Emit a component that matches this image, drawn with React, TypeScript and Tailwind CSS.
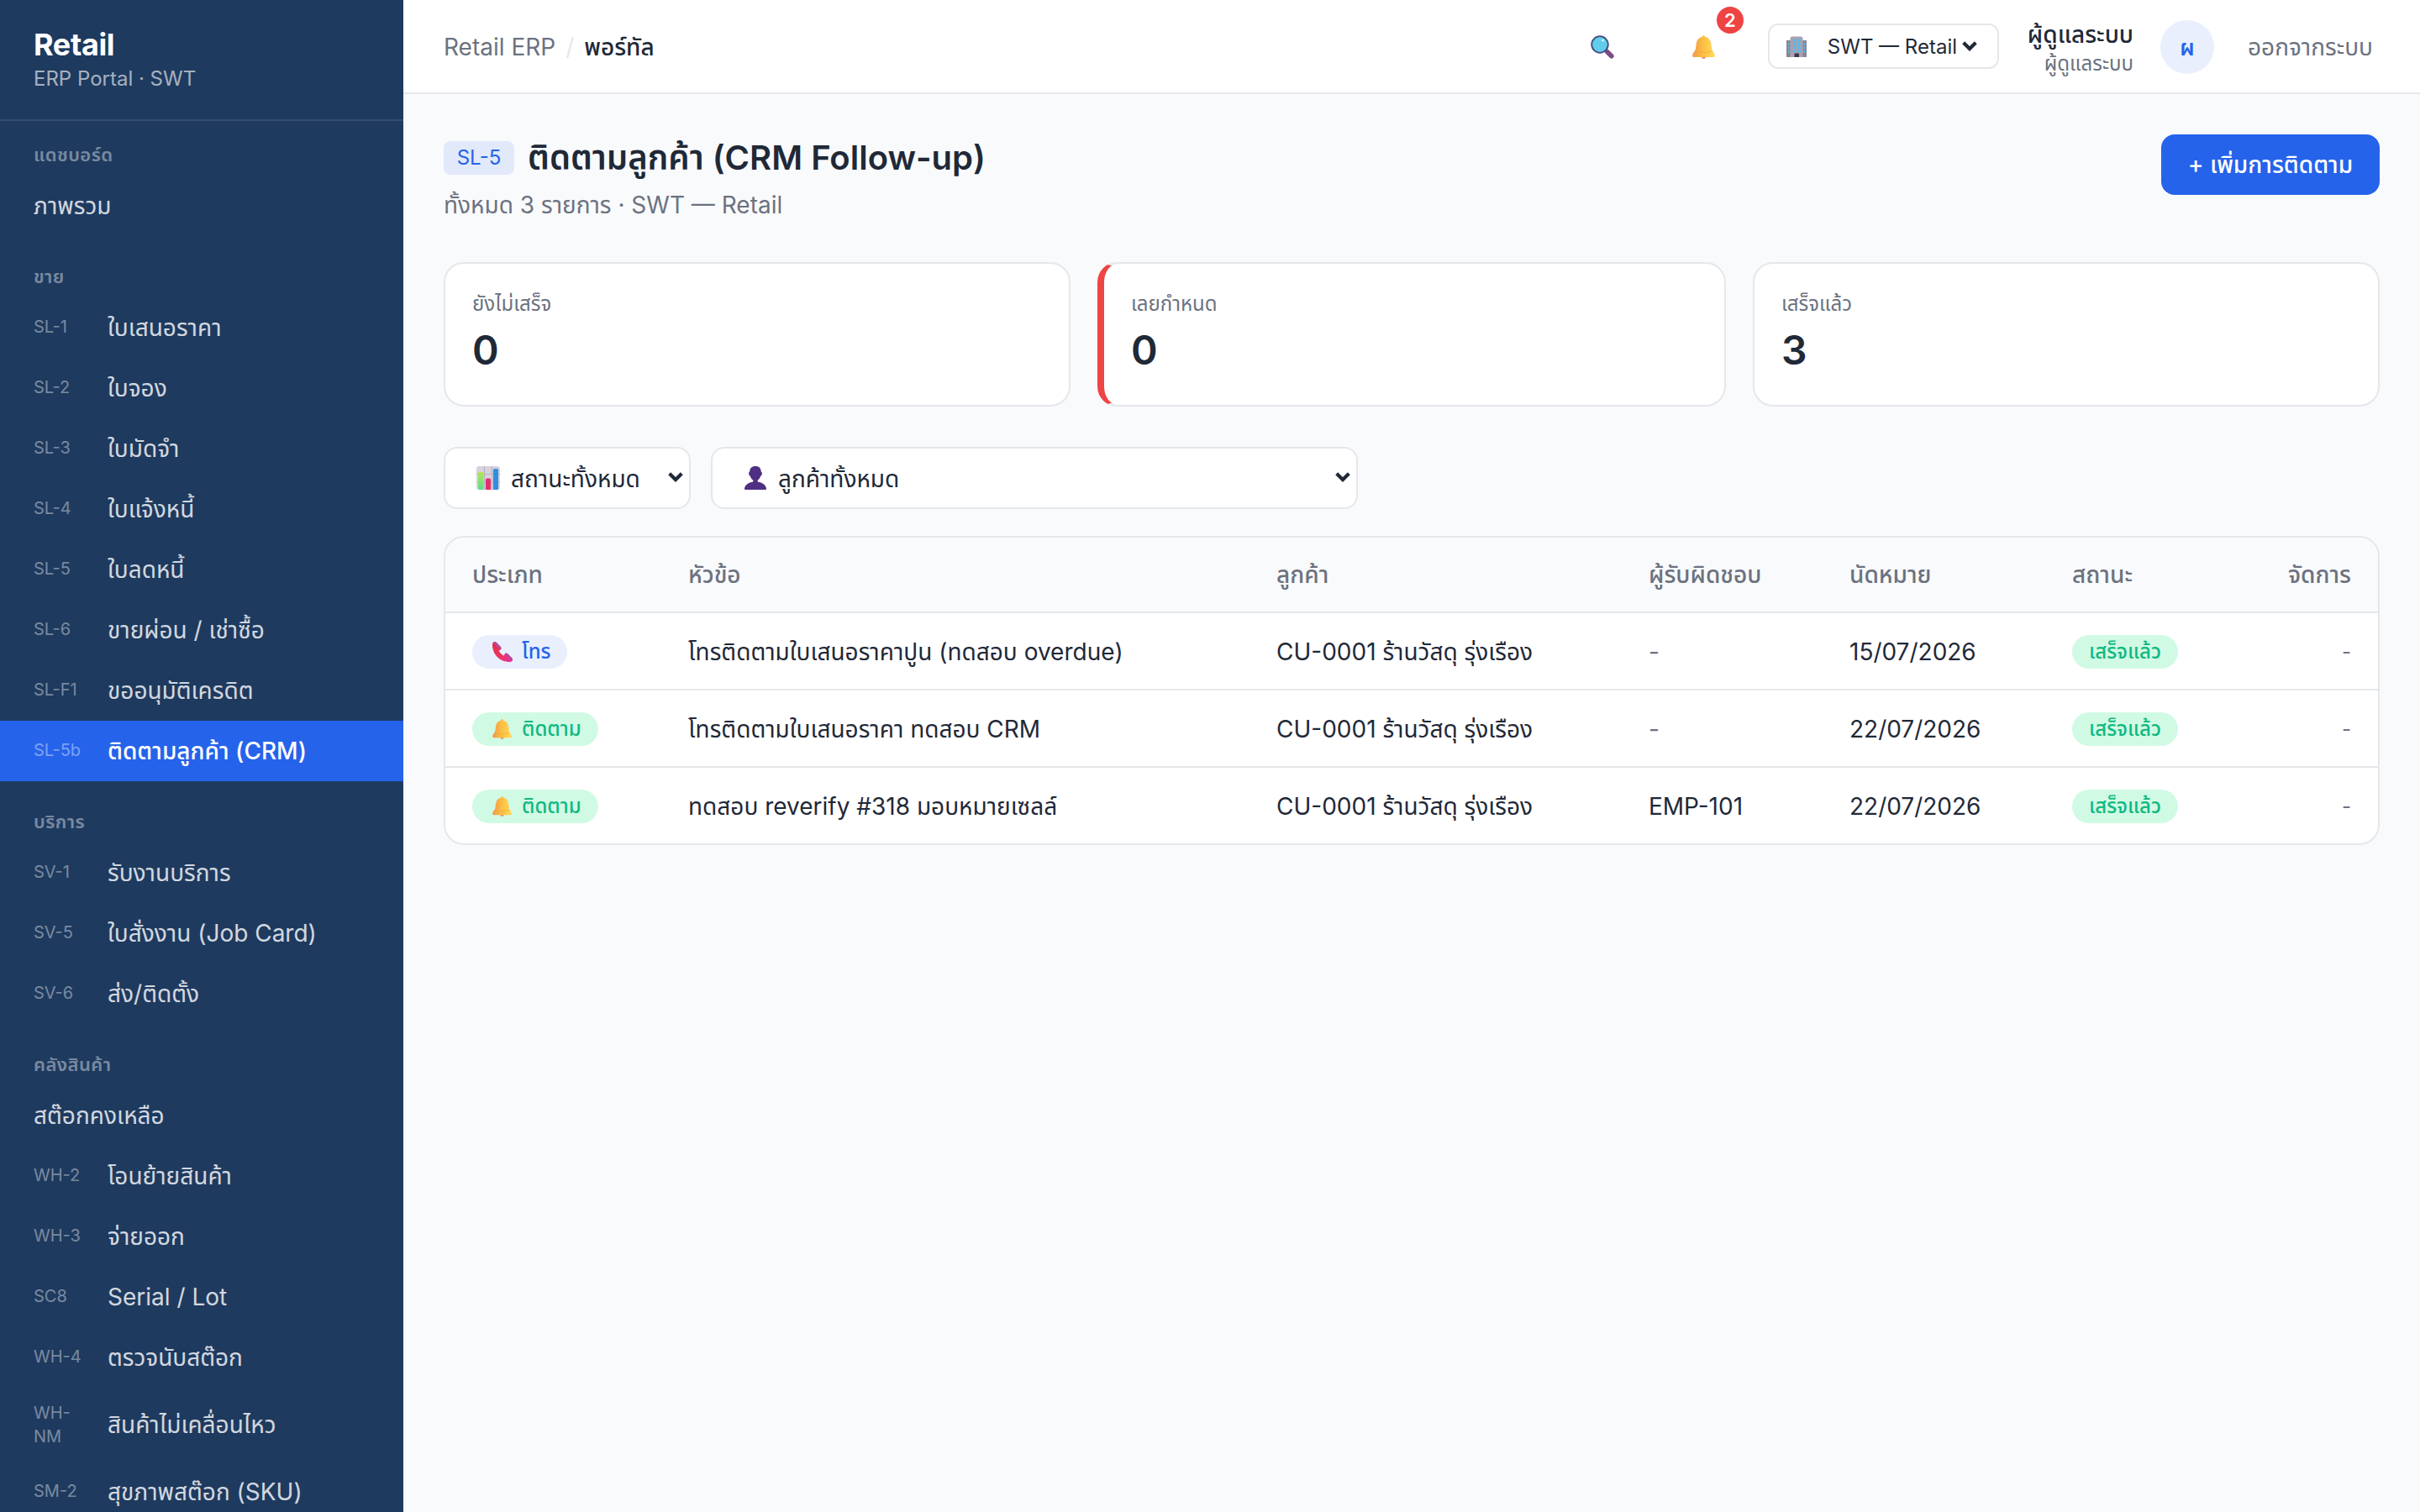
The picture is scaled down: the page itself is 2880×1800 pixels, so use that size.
import type { ReactNode } from "react";
import clsx from "clsx";

type NavItem = { code?: string; label: string; active?: boolean; tall?: boolean };

const sections: { title: string; items: NavItem[] }[] = [
  { title: "แดชบอร์ด", items: [{ label: "ภาพรวม" }] },
  {
    title: "ขาย",
    items: [
      { code: "SL-1", label: "ใบเสนอราคา" },
      { code: "SL-2", label: "ใบจอง" },
      { code: "SL-3", label: "ใบมัดจำ" },
      { code: "SL-4", label: "ใบแจ้งหนี้" },
      { code: "SL-5", label: "ใบลดหนี้" },
      { code: "SL-6", label: "ขายผ่อน / เช่าซื้อ" },
      { code: "SL-F1", label: "ขออนุมัติเครดิต" },
      { code: "SL-5b", label: "ติดตามลูกค้า (CRM)", active: true },
    ],
  },
  {
    title: "บริการ",
    items: [
      { code: "SV-1", label: "รับงานบริการ" },
      { code: "SV-5", label: "ใบสั่งงาน (Job Card)" },
      { code: "SV-6", label: "ส่ง/ติดตั้ง" },
    ],
  },
  {
    title: "คลังสินค้า",
    items: [
      { label: "สต๊อกคงเหลือ" },
      { code: "WH-2", label: "โอนย้ายสินค้า" },
      { code: "WH-3", label: "จ่ายออก" },
      { code: "SC8", label: "Serial / Lot" },
      { code: "WH-4", label: "ตรวจนับสต๊อก" },
      { code: "WH-NM", label: "สินค้าไม่เคลื่อนไหว", tall: true },
      { code: "SM-2", label: "สุขภาพสต๊อก (SKU)" },
    ],
  },
];

const rows = [
  { type: "call", subject: "โทรติดตามใบเสนอราคาปูน (ทดสอบ overdue)", owner: "-", date: "15/07/2026" },
  { type: "follow", subject: "โทรติดตามใบเสนอราคา ทดสอบ CRM", owner: "-", date: "22/07/2026" },
  { type: "follow", subject: "ทดสอบ reverify #318 มอบหมายเซลล์", owner: "EMP-101", date: "22/07/2026" },
];

const columns = "grid grid-cols-[257px_700px_443px_239px_265px_1fr] items-center px-8";

function SearchIcon() {
  return (
    <svg viewBox="0 0 28 28" className="size-7">
      <path d="M19.500 19.500l5.300 5.300" stroke="#7b4a86" strokeWidth="5.600" strokeLinecap="round" />
      <circle cx="11" cy="11" r="9.8" fill="#62cdea" stroke="#464a80" strokeWidth="1.8" />
      <circle cx="14.5" cy="6" r="1.5" fill="#d7f4fc" />
    </svg>
  );
}

function BellIcon({ className }: { className: string }) {
  return (
    <svg viewBox="0 0 28 28" className={className}>
      <defs>
        <linearGradient id="bell" x1="0" x2="1">
          <stop offset="0" stopColor="#f0994a" />
          <stop offset="0.5" stopColor="#fcc044" />
          <stop offset="1" stopColor="#ffdb5c" />
        </linearGradient>
      </defs>
      <circle cx="13.500" cy="25.300" r="2.600" fill="#f08a62" />
      <path
        d="M13.500 0c.9 0 1.500.7 1.700 2 4.300.7 6.700 3.800 7.200 8.200l.8 6.300c.3 2.300 3.300 3.800 3.600 7.500.1 1.200-.3 2-1.300 2H1.600c-1 0-1.500-.8-1.400-2 .3-3.700 3.400-5.200 3.700-7.500l.8-6.300C5.200 5.800 7.500 2.700 11.800 2c.2-1.300.8-2 1.700-2z"
        fill="url(#bell)"
      />
      <path d="M3.900 18.700c6 2.400 13.500 2.400 19.300 0" stroke="#f3a93e" strokeWidth="0.900" fill="none" />
    </svg>
  );
}

function BuildingIcon() {
  return (
    <svg viewBox="0 0 24 26" className="h-[26px] w-6">
      <path d="M0 5h5v20H0zM19 5h5v20h-5z" fill="#8c8494" />
      <path d="M6 .5h12L19.500 2v23h-15V2z" fill="#a9a1b0" />
      <path
        d="M8 3.500h3.500v3H8zM13 3.500h3.500v3H13zM8 7.700h3.500v3H8zM13 7.700h3.500v3H13zM8 12h3.500v3H8zM13 12h3.500v3H13zM8 16.300h3.500v3H8zM13 16.300h3.500v3H13zM2 8h1.500v3H2zM2 12.500h1.500v3H2zM2 17h1.500v3H2zM20.500 8H22v3h-1.500zM20.500 12.500H22v3h-1.500zM20.500 17H22v3h-1.500z"
        fill="#4fbdf2"
      />
      <path d="M9.500 20.500h5.500V25H9.500z" fill="#43364c" />
    </svg>
  );
}

function ChartIcon() {
  return (
    <svg viewBox="0 0 28 28" className="size-7">
      <defs>
        <linearGradient id="bar" x1="0" y1="0" x2="0" y2="1">
          <stop offset="0" stopColor="#b4e552" />
          <stop offset="1" stopColor="#5fdd8e" />
        </linearGradient>
      </defs>
      <rect width="28" height="28" rx="3" fill="#d8d2de" />
      <path d="M0 9.500h28M0 19h28M9.500 0v28M18.500 0v28" stroke="#b9b2c4" strokeWidth="1.200" />
      <path d="M2 8.500q0-1.500 1.500-1.500h3.500Q8.500 7 8.500 8.500V28H3.500q-1.500 0-1.500-1z" fill="url(#bar)" />
      <path d="M11 16q0-1.500 1.500-1.500H15.500q1.500 0 1.500 1.500V28h-6z" fill="#e2306f" />
      <path d="M20 4.500Q20 3 21.500 3h3Q26 3 26 4.500V27q0 1-1 1h-5z" fill="#2f8fe0" />
    </svg>
  );
}

function PersonIcon() {
  return (
    <svg viewBox="0 0 28 28" className="size-7">
      <path
        d="M14 0c4.600 0 6.700 2.600 6.700 6.500.9.300 1.300 1.300 1.200 2.500-.1 1.500-.9 2.600-1.800 2.700-.6 2.300-1.800 4-3.400 5v1.800c5.500.9 9.500 3.500 10.300 8.100.1.800-.2 1.400-1 1.400H2c-.8 0-1.100-.6-1-1.400.8-4.600 4.800-7.200 10.300-8.100v-1.800c-1.600-1-2.800-2.700-3.400-5-.9-.1-1.700-1.200-1.800-2.700-.1-1.200.3-2.200 1.200-2.500C7.300 2.600 9.400 0 14 0z"
        fill="#4f2f83"
      />
    </svg>
  );
}

function PhoneIcon() {
  return (
    <svg viewBox="0 0 24 24" className="size-6">
      <defs>
        <linearGradient id="phone" x1="0" y1="0" x2="1" y2="1">
          <stop offset="0" stopColor="#e02c4c" />
          <stop offset="0.500" stopColor="#ee3558" />
          <stop offset="1" stopColor="#e8309c" />
        </linearGradient>
      </defs>
      <path
        d="M0 3.500C0 1.300 1 0 2.800 0l7.700 8c-.2 1.400-1.400 2.200-3 2.300 1 2.700 3.600 5.300 6.500 6.500 0-1.500.6-2.700 2-3.200l8 8c0 1.500-1.200 2.400-3.200 2.400C9 24 0 15.500 0 3.500z"
        fill="url(#phone)"
      />
      <path d="M2.800 0c1-.3 1.700.2 2.400 1L10 6c.8.8.8 1.500.5 2.300L8.500 9 1.800 1.500z" fill="#b84a9c" />
      <path d="M16 13.600c1-.3 1.700 0 2.400.7L23.500 19.500c.8.8.8 1.500.5 2.300l-2 .4-7-7z" fill="#bb449f" />
    </svg>
  );
}

function Chevron() {
  return (
    <svg viewBox="0 0 18 12" className="mb-0.5 h-3 w-[18px] shrink-0">
      <path d="M1.700 1.700L9 9l7.300-7.300" fill="none" stroke="#1f2937" strokeWidth="4.200" />
    </svg>
  );
}

function Pill({ tone, children }: { tone: "blue" | "green"; children: ReactNode }) {
  return (
    <span
      className={clsx(
        "inline-flex h-10 items-center rounded-full text-2xl font-medium whitespace-nowrap",
        tone === "blue" ? "bg-[#e9effd] text-[#2563eb]" : "bg-[#d1fae5] text-[#10b981]",
      )}
    >
      {children}
    </span>
  );
}

function Sidebar() {
  return (
    <aside className="h-full w-[480px] shrink-0 overflow-hidden bg-[#1e3a5f] text-white">
      <div className="h-36 border-b-2 border-white/10 px-10 pt-[31px]">
        <div className="text-4xl leading-[44px] font-bold tracking-[-0.01em]">Retail</div>
        <div className="mt-px text-2xl leading-9 opacity-60">ERP Portal · SWT</div>
      </div>
      <nav>
        {sections.map((section, i) => (
          <div key={section.title}>
            <div
              className={clsx(
                "flex items-end px-10 pb-[9px] text-[22px] leading-8 font-semibold tracking-[0.02em] opacity-40",
                i === 0 ? "h-[65px]" : "h-[73px]",
              )}
            >
              {section.title}
            </div>
            {section.items.map((item) => (
              <div
                key={item.label}
                className={clsx(
                  "flex items-center px-10 text-[28px] whitespace-nowrap",
                  item.tall ? "h-[88px]" : "h-[72px]",
                  item.active ? "bg-[#2563eb] font-medium" : "opacity-80",
                )}
              >
                {item.code && (
                  <span
                    className={clsx(
                      "mr-6 w-16 shrink-0 text-xl leading-7 font-normal whitespace-normal",
                      item.active ? "opacity-40" : "opacity-50",
                      !item.tall && "pb-0.5",
                    )}
                  >
                    {item.code}
                  </span>
                )}
                <span>{item.label}</span>
              </div>
            ))}
          </div>
        ))}
      </nav>
    </aside>
  );
}

function Topbar() {
  return (
    <header className="flex h-28 items-center border-b-2 border-[#e5e7eb] bg-white pr-14 pl-12 text-[28px]">
      <div className="flex items-center pt-0.5">
        <span className="text-[#6b7280]">Retail ERP</span>
        <span className="mx-3 text-[#e5e7eb]">/</span>
        <span className="font-medium">พอร์ทัล</span>
      </div>
      <div className="ml-auto flex items-center pt-0.5">
        <SearchIcon />
        <div className="relative mr-[62px] ml-[93px]">
          <BellIcon className="size-7" />
          <span className="absolute -top-[34px] left-[29px] flex size-8 items-center justify-center rounded-full bg-[#ef4444] text-[22px] font-semibold text-white">
            2
          </span>
        </div>
        <button className="mb-0.5 flex h-[54px] w-[275px] items-center rounded-xl border-2 border-[#e5e7eb] pt-0.5 pl-5 text-2xl whitespace-nowrap">
          <BuildingIcon />
          <span className="mr-1.5 ml-[25px]">SWT — Retail</span>
          <Chevron />
        </button>
        <div className="ml-[34px] pt-[3px] text-right whitespace-nowrap">
          <div className="text-[28px] leading-9 font-medium">ผู้ดูแลระบบ</div>
          <div className="text-2xl leading-[34px] text-[#6b7280]">ผู้ดูแลระบบ</div>
        </div>
        <div className="ml-8 flex size-16 items-center justify-center rounded-full bg-[#e9effd] text-[26px] font-semibold text-[#2563eb]">
          ผ
        </div>
        <span className="ml-10 text-[28px] text-[#6b7280]">ออกจากระบบ</span>
      </div>
    </header>
  );
}

function Stat({ label, value, danger }: { label: string; value: number; danger?: boolean }) {
  return (
    <div
      className={clsx(
        "h-[172px] rounded-3xl border-2 border-[#e5e7eb] bg-white px-8 pt-[30px]",
        danger && "border-l-8 border-l-[#ef4444]",
      )}
    >
      <div className="text-2xl leading-9 text-[#6b7280]">{label}</div>
      <div className="mt-1.5 text-5xl leading-[62px] font-semibold">{value}</div>
    </div>
  );
}

export default function App() {
  return (
    <div className="flex h-[1800px] w-[2880px] overflow-hidden bg-[#f9fafc] font-['Inter','Noto_Sans_Thai',sans-serif] text-[#1f2937]">
      <Sidebar />
      <div className="min-w-0 flex-1">
        <Topbar />
        <main className="px-12 pt-12">
          <div className="flex h-[152px] items-start justify-between">
            <div>
              <div className="flex h-14 items-center gap-4">
                <span className="flex h-10 w-[84px] items-center justify-center rounded-lg bg-[#e1e9fa] text-2xl text-[#2563eb]">
                  SL-5
                </span>
                <h1 className="text-[40px] font-semibold whitespace-nowrap">ติดตามลูกค้า (CRM Follow-up)</h1>
              </div>
              <p className="mt-2 text-[28px] leading-10 text-[#6b7280]">ทั้งหมด 3 รายการ · SWT — Retail</p>
            </div>
            <button className="h-[72px] w-[260px] rounded-2xl bg-[#2563eb] text-[28px] font-medium whitespace-nowrap text-white">
              + เพิ่มการติดตาม
            </button>
          </div>

          <div className="grid grid-cols-[746px_748px_746px] gap-8">
            <Stat label="ยังไม่เสร็จ" value={0} />
            <Stat label="เลยกำหนด" value={0} danger />
            <Stat label="เสร็จแล้ว" value={3} />
          </div>

          <div className="mt-12 flex gap-6 text-[28px]">
            <button className="flex h-[74px] w-[294px] items-center rounded-2xl border-2 border-[#e5e7eb] bg-white pr-[7px] pl-[37px] whitespace-nowrap">
              <ChartIcon />
              <span className="mr-auto ml-[13px] pt-0.5">สถานะทั้งหมด</span>
              <Chevron />
            </button>
            <button className="flex h-[74px] w-[770px] items-center rounded-2xl border-2 border-[#e5e7eb] bg-white pr-[7px] pl-[37px] whitespace-nowrap">
              <PersonIcon />
              <span className="mr-auto ml-[13px] pt-0.5">ลูกค้าทั้งหมด</span>
              <Chevron />
            </button>
          </div>

          <div className="mt-8 overflow-hidden rounded-3xl border-2 border-[#e5e7eb] bg-white text-[28px] whitespace-nowrap">
            <div className={clsx(columns, "h-[88px] bg-[#f9fafc] font-medium text-[#6b7280]")}>
              <span>ประเภท</span>
              <span>หัวข้อ</span>
              <span>ลูกค้า</span>
              <span>ผู้รับผิดชอบ</span>
              <span>นัดหมาย</span>
              <span className="flex justify-between">
                <span>สถานะ</span>
                <span>จัดการ</span>
              </span>
            </div>
            {rows.map((row) => (
              <div key={row.subject} className={clsx(columns, "h-[92px] border-t-2 border-[#e5e7eb] pt-0.5")}>
                <span className="flex">
                  <Pill tone={row.type === "call" ? "blue" : "green"}>
                    <span className="mr-[11px] ml-6">
                      {row.type === "call" ? <PhoneIcon /> : <BellIcon className="size-6" />}
                    </span>
                    <span className="mr-5">{row.type === "call" ? "โทร" : "ติดตาม"}</span>
                  </Pill>
                </span>
                <span>{row.subject}</span>
                <span>CU-0001 ร้านวัสดุ รุ่งเรือง</span>
                <span className={row.owner === "-" ? "text-[#6b7280]" : ""}>{row.owner}</span>
                <span>{row.date}</span>
                <span className="flex items-center justify-between">
                  <Pill tone="green">
                    <span className="px-5">เสร็จแล้ว</span>
                  </Pill>
                  <span className="text-2xl text-[#6b7280]">-</span>
                </span>
              </div>
            ))}
          </div>
        </main>
      </div>
    </div>
  );
}
